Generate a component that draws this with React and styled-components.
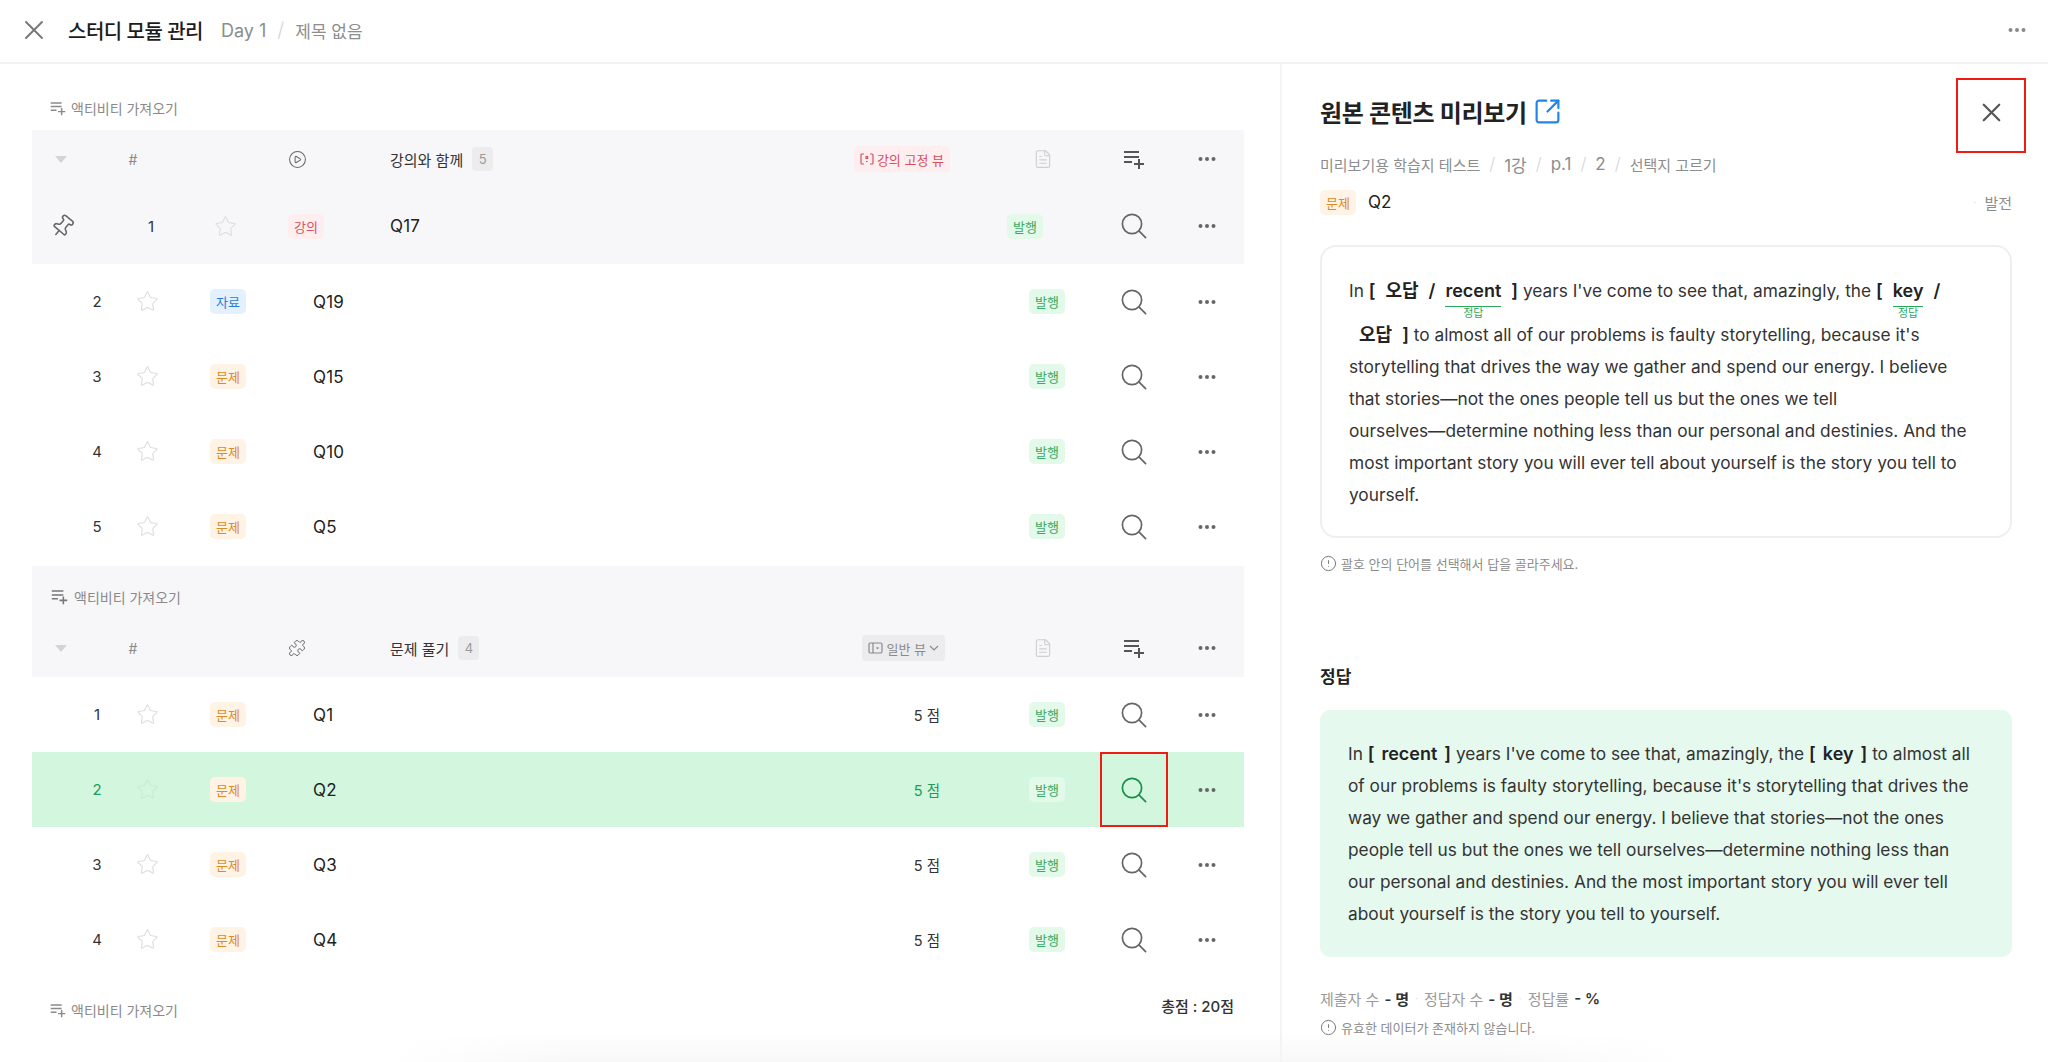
import React from 'react';
import styled, { createGlobalStyle } from 'styled-components';
import { CircleAlert, CirclePlay, FileText, Pin, Puzzle, SquareArrowOutUpRight, Star, X } from 'lucide-react';

const GlobalStyle = createGlobalStyle`
	html, body {
		margin: 0;
		padding: 0;
		background: #fff;
	}
	body {
		font-family: Inter, 'Noto Sans CJK KR', 'Noto Sans', sans-serif;
		color: #222;
	}
	* {
		box-sizing: border-box;
	}
`;

const Page = styled.div`
	position: relative;
	width: 2048px;
	height: 1062px;
	overflow: hidden;
	display: flex;
	flex-direction: column;
`;

const TopBar = styled.header`
	flex: none;
	height: 64px;
	display: flex;
	align-items: center;
	padding: 0 22px 2px 18px;
	border-bottom: 2px solid #f2f2f3;
	color: #777;
`;

const TopTitle = styled.h1`
	margin: 0 18px 0 18px;
	font-size: 20px;
	font-weight: 500;
	letter-spacing: -0.5px;
	color: #1c1c1c;
`;

const Crumb = styled.span`
	font-size: ${(p) => p.$size || 17}px;
	color: #8d8d8d;
	white-space: nowrap;
`;

const DayCrumb = styled(Crumb)`
	font-size: 18px;
`;

const Slash = styled.span`
	margin: 0 ${(p) => p.$gap || 11}px;
	font-size: ${(p) => p.$size || 20}px;
	font-weight: 300;
	color: #d6d6d6;
`;

const Spacer = styled.div`
	flex: 1;
`;

const Body = styled.main`
	flex: 1;
	display: flex;
	min-height: 0;
`;

const LeftPane = styled.section`
	flex: none;
	width: 1282px;
	padding: 0 36px 0 32px;
	border-right: 2px solid #f4f4f5;
`;

const ImportLabel = styled.div`
	display: flex;
	align-items: center;
	gap: ${(p) => (p.$inGroup ? 6 : 5)}px;
	height: ${(p) => (p.$inGroup ? 53 : 44)}px;
	padding: ${(p) => (p.$inGroup ? '8px 0 0 19px' : '0 0 0 18px')};
	font-size: 14px;
	color: #8a8a8a;
	white-space: nowrap;
`;

const TopLabelRow = styled.div`
	padding-top: 22px;
`;

const GrayGroup = styled.div`
	background: #f7f7f9;
	margin-top: ${(p) => p.$top || 0}px;
`;

const HeadRow = styled.div`
	display: grid;
	grid-template-columns: 58px 86px 214px 1fr auto 106px 68px 76px;
	align-items: center;
	height: 58px;
	font-size: 15px;
`;

const Cell = styled.div`
	display: flex;
	align-items: center;
	justify-content: ${(p) => p.$align || 'center'};
	min-width: 0;
	padding-left: ${(p) => p.$left || 0}px;
	padding-right: ${(p) => p.$right || 0}px;
	height: 100%;
`;

const Hash = styled.span`
	color: #8a8a8a;
	font-size: 14px;
`;

const Caret = styled.span`
	width: 0;
	height: 0;
	border-left: 6px solid transparent;
	border-right: 6px solid transparent;
	border-top: 7px solid #d4d4d6;
`;

const GroupName = styled.span`
	color: #333;
	white-space: nowrap;
`;

const CountChip = styled.span`
	margin-left: 9px;
	width: 21px;
	height: 24px;
	display: flex;
	align-items: center;
	justify-content: center;
	background: #ececee;
	border-radius: 4px;
	font-size: 13px;
	color: #9a9a9a;
`;

const ViewTag = styled.span`
	display: flex;
	align-items: center;
	gap: 3px;
	height: 26px;
	padding: 0 6px;
	margin-right: ${(p) => (p.$fixed ? 44 : 49)}px;
	border-radius: 4px;
	font-size: 13px;
	white-space: nowrap;
	background: ${(p) => (p.$fixed ? '#ffeef0' : '#ececee')};
	color: ${(p) => (p.$fixed ? '#d4505f' : '#8a8a8a')};
`;

const DataRow = styled.div`
	display: grid;
	grid-template-columns: ${(p) =>
		p.$pinned ? '99px 40px 108px 54px 1fr 0 128px 68px 76px' : '45px 40px 60px 102px 1fr 162px 106px 68px 76px'};
	align-items: center;
	height: ${(p) => (p.$pinned ? 76 : 75)}px;
	font-size: 15px;
	background: ${(p) => (p.$active ? '#d3f6de' : 'transparent')};
`;

const RowNo = styled.span`
	font-size: 15px;
	color: ${(p) => (p.$active ? '#249a57' : '#333')};
`;

const RowTitle = styled.span`
	font-size: 17px;
	letter-spacing: 0.2px;
	color: #222;
	white-space: nowrap;
`;

const Score = styled.span`
	font-size: 14.5px;
	white-space: nowrap;
	color: ${(p) => (p.$active ? '#249a57' : '#333')};
`;

const badgeColors = {
	lecture: ['#ffeef0', '#d9505f'],
	doc: ['#e3f1ff', '#2a7bd6'],
	quiz: ['#fff3e6', '#df8a22'],
	live: ['#e3f9ea', '#3aa963'],
};

const Badge = styled.span`
	display: inline-flex;
	align-items: center;
	justify-content: center;
	height: 25px;
	padding: 0 6px;
	border-radius: 5px;
	font-size: 13px;
	white-space: nowrap;
	background: ${(p) => badgeColors[p.$kind][0]};
	color: ${(p) => badgeColors[p.$kind][1]};
`;

const SearchCell = styled.div`
	height: 100%;
	display: flex;
	align-items: center;
	justify-content: center;
	color: ${(p) => (p.$active ? '#178f4a' : '#666')};
	border: ${(p) => (p.$active ? '2px solid #ee1c14' : 'none')};
`;

const Footer = styled.div`
	display: flex;
	align-items: center;
	justify-content: space-between;
	height: 66px;
`;

const Total = styled.span`
	margin: 0 10px 10px 0;
	font-size: 15px;
	font-weight: 500;
	color: #333;
`;

const RightPane = styled.section`
	flex: 1;
	min-width: 0;
	padding: 14px 36px 0 38px;
`;

const TitleRow = styled.div`
	display: flex;
	align-items: center;
	justify-content: space-between;
	height: 75px;
	margin-right: -14px;
`;

const PaneTitle = styled.h2`
	display: flex;
	align-items: center;
	gap: 6px;
	margin: 0;
	padding-bottom: 8px;
	font-size: 24px;
	font-weight: 700;
	letter-spacing: -0.3px;
	color: #222;
	white-space: nowrap;
`;

const CloseBox = styled.div`
	width: 70px;
	height: 75px;
	padding: 0 0 7px 1px;
	display: flex;
	align-items: center;
	justify-content: center;
	border: 2px solid #ee1c14;
	color: #555;
`;

const Breadcrumb = styled.div`
	display: flex;
	align-items: center;
	height: 22px;
`;

const MetaRow = styled.div`
	display: flex;
	align-items: center;
	height: 30px;
	margin-top: 12px;
`;

const MetaName = styled.span`
	margin-left: 12px;
	font-size: 17px;
	color: #222;
`;

const Passage = styled.div`
	height: 293px;
	margin-top: 28px;
	padding: 28px 36px 0 27px;
	border: 2px solid #efeff0;
	border-radius: 16px;
	font-size: 17.3px;
	line-height: 32px;
	color: #333;
`;

const Choice = styled.span`
	display: inline-block;
	font-size: 18px;
	font-weight: 600;
	padding-bottom: ${(p) => (p.$marked ? 12 : 0)}px;
	color: #222;
`;

const ChoiceWord = styled.span`
	position: relative;
	display: inline-block;
	margin: 0 10px;
`;

const CorrectMark = styled.span`
	position: absolute;
	left: 0;
	right: 0;
	top: 31px;
	border-top: 1.5px solid #2aa85c;
	font-size: 11px;
	line-height: 13px;
	font-weight: 400;
	text-align: center;
	color: #2aa85c;
`;

const NoBreak = styled.span`
	white-space: nowrap;
`;

const Note = styled.div`
	display: flex;
	align-items: center;
	gap: 4px;
	height: 20px;
	margin-top: ${(p) => p.$top}px;
	font-size: 13px;
	color: #8d8d8d;
`;

const AnswerTitle = styled.h3`
	height: 20px;
	margin: 94px 0 0;
	font-size: 17px;
	line-height: 20px;
	font-weight: 700;
	color: #222;
`;

const AnswerBox = styled.div`
	height: 247px;
	margin-top: 23px;
	padding: 28px 38px 0 28px;
	background: #e6f9ee;
	border-radius: 10px;
	font-size: 17.3px;
	line-height: 32px;
	color: #333;
`;

const Strong = styled.strong`
	font-size: 18px;
	font-weight: 600;
	color: #222;
`;

const AnswerWord = styled.span`
	margin: 0 7px;
`;

const Stats = styled.div`
	display: flex;
	align-items: center;
	height: 22px;
	margin-top: 30px;
	font-size: 15px;
	color: #9a9a9a;
`;

const StatValue = styled.b`
	margin-left: 5px;
	font-weight: 600;
	color: #333;
`;

const StatDot = styled.span`
	margin: 0 ${(p) => p.$gap || 6}px;
	color: #ddd;
	font-size: 10px;
`;

const BottomFade = styled.div`
	position: absolute;
	left: 380px;
	right: 360px;
	bottom: 0;
	height: 30px;
	background: linear-gradient(to bottom, rgba(244, 244, 244, 0), rgba(244, 244, 244, 0.7));
	mask-image: linear-gradient(to right, transparent, #000 15%, #000 85%, transparent);
	pointer-events: none;
`;

const Dots = ({ color = '#666' }) => (
	<svg width='18' height='6' viewBox='0 0 18 6' fill={color}>
		<circle cx='2.5' cy='3' r='2' />
		<circle cx='9' cy='3' r='2' />
		<circle cx='15.5' cy='3' r='2' />
	</svg>
);

const ListAdd = ({ size = 22, color = '#555' }) => (
	<svg width={size} height={size} viewBox='0 0 22 22' fill='none' stroke={color} strokeWidth='2'>
		<path d='M1 4h15M1 9h15M1 14h8M11 16h10M16 11v10' />
	</svg>
);

const SearchGlyph = () => (
	<svg width='26' height='26' viewBox='0 0 26 26' fill='none' stroke='currentColor' strokeWidth='1.7' strokeLinecap='round'>
		<circle cx='11' cy='11' r='9.6' />
		<path d='M17.9 17.9L24.6 24.6' />
	</svg>
);

const FixedViewIcon = () => (
	<svg width='14' height='14' viewBox='0 0 14 14' fill='none' stroke='#d4505f' strokeWidth='1.2'>
		<path d='M4 2H2a1 1 0 0 0-1 1v8a1 1 0 0 0 1 1h2M10 2h2a1 1 0 0 1 1 1v8a1 1 0 0 1-1 1h-2M6 4.5h1.6v2H6zM6 9.5h1.6' />
	</svg>
);

const PlainViewIcon = () => (
	<svg width='15' height='14' viewBox='0 0 15 14' fill='none' stroke='#8a8a8a' strokeWidth='1.2'>
		<rect x='1' y='2' width='13' height='10' rx='1.5' />
		<path d='M5 2v10M8.5 6.5l1 1 1-1' />
	</svg>
);

const ChevronSmall = () => (
	<svg width='10' height='6' viewBox='0 0 10 6' fill='none' stroke='#8a8a8a' strokeWidth='1.2'>
		<path d='M1 1l4 4 4-4' />
	</svg>
);

const FirstRows = [
	{ no: 2, kind: 'doc', label: '자료', title: 'Q19' },
	{ no: 3, kind: 'quiz', label: '문제', title: 'Q15' },
	{ no: 4, kind: 'quiz', label: '문제', title: 'Q10' },
	{ no: 5, kind: 'quiz', label: '문제', title: 'Q5' },
];

const SecondRows = [
	{ no: 1, kind: 'quiz', label: '문제', title: 'Q1', score: '5 점' },
	{ no: 2, kind: 'quiz', label: '문제', title: 'Q2', score: '5 점', active: true },
	{ no: 3, kind: 'quiz', label: '문제', title: 'Q3', score: '5 점' },
	{ no: 4, kind: 'quiz', label: '문제', title: 'Q4', score: '5 점' },
];

const ActivityRow = ({ row, pinned }) => (
	<DataRow $pinned={pinned} $active={row.active}>
		<Cell $align='flex-start' $left={pinned ? 18 : 0}>
			{pinned && <Pin size={25} strokeWidth={1.5} color='#666' style={{ transform: 'rotate(40deg)' }} />}
		</Cell>
		<Cell>
			<RowNo $active={row.active}>{row.no}</RowNo>
		</Cell>
		<Cell>
			<Star size={23} strokeWidth={1.2} color={row.active ? '#c9ebd4' : '#dedede'} />
		</Cell>
		<Cell>
			<Badge $kind={row.kind}>{row.label}</Badge>
		</Cell>
		<Cell $align='flex-start' $left={pinned ? 57 : 34}>
			<RowTitle>{row.title}</RowTitle>
		</Cell>
		<Cell $align='flex-end' $right={pinned ? 0 : 54}>
			{row.score && <Score $active={row.active}>{row.score}</Score>}
		</Cell>
		<Cell $right={pinned ? 22 : 0}>
			<Badge $kind='live'>발행</Badge>
		</Cell>
		<SearchCell $active={row.active}>
			<SearchGlyph />
		</SearchCell>
		<Cell $left={2}>
			<Dots />
		</Cell>
	</DataRow>
);

const GroupHead = ({ icon, name, count, tag }) => (
	<HeadRow>
		<Cell>
			<Caret />
		</Cell>
		<Cell>
			<Hash>#</Hash>
		</Cell>
		<Cell $left={28}>{icon}</Cell>
		<Cell $align='flex-start'>
			<GroupName>{name}</GroupName>
			<CountChip>{count}</CountChip>
		</Cell>
		{tag}
		<Cell $right={8}>
			<FileText size={20} strokeWidth={1.3} color='#cfcfd2' />
		</Cell>
		<Cell>
			<ListAdd />
		</Cell>
		<Cell $left={2}>
			<Dots />
		</Cell>
	</HeadRow>
);

const App = () => {
	return (
		<Page>
			<GlobalStyle />
			<TopBar>
				<X size={32} strokeWidth={1.4} />
				<TopTitle>스터디 모듈 관리</TopTitle>
				<DayCrumb>Day 1</DayCrumb>
				<Slash>/</Slash>
				<Crumb>제목 없음</Crumb>
				<Spacer />
				<Dots color='#8a8a8a' />
			</TopBar>
			<Body>
				<LeftPane>
					<TopLabelRow>
						<ImportLabel>
							<ListAdd size={16} color='#8a8a8a' />
							액티비티 가져오기
						</ImportLabel>
					</TopLabelRow>
					<GrayGroup>
						<GroupHead
							icon={<CirclePlay size={19} strokeWidth={1.3} color='#666' />}
							name='강의와 함께'
							count={5}
							tag={
								<ViewTag $fixed>
									<FixedViewIcon />
									강의 고정 뷰
								</ViewTag>
							}
						/>
						<ActivityRow pinned row={{ no: 1, kind: 'lecture', label: '강의', title: 'Q17' }} />
					</GrayGroup>
					{FirstRows.map((row) => (
						<ActivityRow key={row.title} row={row} />
					))}
					<GrayGroup $top={2}>
						<ImportLabel $inGroup>
							<ListAdd size={17} color='#777' />
							액티비티 가져오기
						</ImportLabel>
						<GroupHead
							icon={<Puzzle size={18} strokeWidth={1.3} color='#666' />}
							name='문제 풀기'
							count={4}
							tag={
								<ViewTag>
									<PlainViewIcon />
									일반 뷰
									<ChevronSmall />
								</ViewTag>
							}
						/>
					</GrayGroup>
					{SecondRows.map((row) => (
						<ActivityRow key={row.title} row={row} />
					))}
					<Footer>
						<ImportLabel>
							<ListAdd size={16} color='#8a8a8a' />
							액티비티 가져오기
						</ImportLabel>
						<Total>총점 : 20점</Total>
					</Footer>
				</LeftPane>
				<RightPane>
					<TitleRow>
						<PaneTitle>
							원본 콘텐츠 미리보기
							<SquareArrowOutUpRight size={29} strokeWidth={1.8} color='#1f86e8' />
						</PaneTitle>
						<CloseBox>
							<X size={31} strokeWidth={1.7} />
						</CloseBox>
					</TitleRow>
					<Breadcrumb>
						<Crumb $size={15}>미리보기용 학습지 테스트</Crumb>
						<Slash $size={17} $gap={9}>/</Slash>
						<Crumb $size={17}>1강</Crumb>
						<Slash $size={17} $gap={9}>/</Slash>
						<Crumb $size={17}>p.1</Crumb>
						<Slash $size={17} $gap={9}>/</Slash>
						<Crumb $size={17}>2</Crumb>
						<Slash $size={17} $gap={9}>/</Slash>
						<Crumb $size={15}>선택지 고르기</Crumb>
					</Breadcrumb>
					<MetaRow>
						<Badge $kind='quiz'>문제</Badge>
						<MetaName>Q2</MetaName>
						<Spacer />
						<StatDot $gap={8}>·</StatDot>
						<Crumb $size={15}>발전</Crumb>
					</MetaRow>
					<Passage>
						In{' '}
						<Choice $marked>
							[<ChoiceWord>오답</ChoiceWord>/
							<ChoiceWord>
								recent
								<CorrectMark>정답</CorrectMark>
							</ChoiceWord>
							]
						</Choice>{' '}
						years I've come to see that, amazingly, the{' '}
						<Choice $marked>
							[
							<ChoiceWord>
								key
								<CorrectMark>정답</CorrectMark>
							</ChoiceWord>
							/
						</Choice>{' '}
						<Choice>
							<ChoiceWord>오답</ChoiceWord>]
						</Choice>{' '}
						to almost all of our problems is faulty storytelling, because it's storytelling that drives the way we
						gather and spend our energy. I believe that stories—not the ones people tell us but the ones we tell{' '}
						<NoBreak>ourselves—determine</NoBreak> nothing less than our personal and destinies. And the most important
						story you will ever tell about yourself is the story you tell to yourself.
					</Passage>
					<Note $top={15}>
						<CircleAlert size={17} strokeWidth={1.4} color='#777' />
						괄호 안의 단어를 선택해서 답을 골라주세요.
					</Note>
					<AnswerTitle>정답</AnswerTitle>
					<AnswerBox>
						In{' '}
						<Strong>
							[<AnswerWord>recent</AnswerWord>]
						</Strong>{' '}
						years I've come to see that, amazingly, the{' '}
						<Strong>
							[<AnswerWord>key</AnswerWord>]
						</Strong>{' '}
						to almost all of our problems is faulty storytelling, because it's storytelling that drives the way we
						gather and spend our energy. I believe that stories—not the ones people tell us but the ones we tell
						ourselves—determine nothing less than our personal and destinies. And the most important story you will
						ever tell about yourself is the story you tell to yourself.
					</AnswerBox>
					<Stats>
						제출자 수<StatValue>- 명</StatValue>
						<StatDot>·</StatDot>
						정답자 수<StatValue>- 명</StatValue>
						<StatDot>·</StatDot>
						정답률<StatValue>- %</StatValue>
					</Stats>
					<Note $top={8}>
						<CircleAlert size={17} strokeWidth={1.4} color='#777' />
						유효한 데이터가 존재하지 않습니다.
					</Note>
				</RightPane>
			</Body>
			<BottomFade />
		</Page>
	);
};

export default App;
